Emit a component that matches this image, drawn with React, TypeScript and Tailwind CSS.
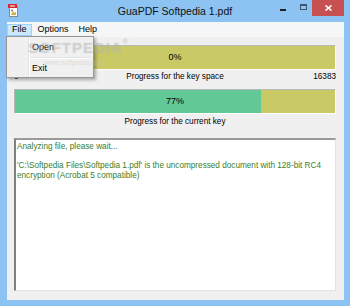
import React from 'react';

const FONT = { fontFamily: '"Liberation Sans", Arial, sans-serif' };

function AppIcon() {
  return (
    <svg width="11" height="13" viewBox="0 0 11 13">
      <rect x="1.5" y="2.5" width="8" height="10" fill="#fff" stroke="#8a8a8a" />
      <rect x="0" y="0" width="9" height="4" fill="#d8262a" />
      <rect x="2" y="1.5" width="5" height="1" fill="#fff" />
      <path d="M3 11 L5 7 L6.5 9 L8 7.5 L8 11 Z" fill="#d8b13a" />
      <circle cx="4" cy="6.5" r="0.9" fill="#6a6a6a" />
    </svg>
  );
}

function ProgressBar({ percent }: { percent: number }) {
  return (
    <div className="relative h-[25px] bg-[#c9c966] border-t border-l border-[#b9b9b9] border-r-white border-b-white border-r border-b">
      <div className="h-full bg-[#62c996]" style={{ width: `${percent}%` }} />
      <div className="absolute inset-0 flex items-center justify-center text-[9px] text-black">
        {percent}%
      </div>
    </div>
  );
}

export default function App() {
  return (
    <div
      className="relative w-[350px] h-[306px] overflow-hidden bg-[#8cc3f2] flex flex-col text-black"
      style={FONT}
    >
      {/* title bar */}
      <div className="h-[22px] flex items-start shrink-0">
        <div className="w-[80px] pl-[8px] pt-[4px]">
          <AppIcon />
        </div>
        <div className="flex-1 text-center text-[10.5px] leading-[22px] text-[#111]">
          GuaPDF Softpedia 1.pdf
        </div>
        <div className="w-[80px] flex justify-end pr-[6px]">
          <div className="w-[22px] h-[16px] flex items-center justify-center">
            <div className="w-[6px] h-[2px] bg-[#222] mt-[3px]" />
          </div>
          <div className="w-[18px] h-[16px] flex items-center justify-center">
            <div className="w-[7px] h-[6px] border border-t-2 border-[#3d5571] -mt-[3px]" />
          </div>
          <div className="w-[32px] h-[16px] bg-[#c75050] flex items-center justify-center">
            <svg width="7" height="6" viewBox="0 0 7 6">
              <path d="M0.5 0.5 L6.5 5.5 M6.5 0.5 L0.5 5.5" stroke="#fff" strokeWidth="1.6" />
            </svg>
          </div>
        </div>
      </div>

      {/* client */}
      <div className="flex-1 ml-[7px] mr-[6px] mb-[6px] flex flex-col bg-[#f0f0f0]">
        <div className="h-[15px] bg-[#f5f6f7] flex items-center text-[9px] shrink-0">
          <div className="h-[12px] px-[4px] flex items-center bg-[#cce8ff] border border-[#99d1ff]">File</div>
          <div className="px-[5px] ml-[1px]">Options</div>
          <div className="px-[5px]">Help</div>
        </div>

        <div className="flex-1 pt-[8px] pl-[7px] pr-[8px] flex flex-col text-[8.2px]">
          <ProgressBar percent={0} />
          <div className="mt-[2px] h-[10px] grid grid-cols-3 items-center leading-[10px]">
            <div>0</div>
            <div className="text-center whitespace-nowrap">Progress for the key space</div>
            <div className="text-right">16383</div>
          </div>
          <div className="mt-[7px]">
            <ProgressBar percent={77} />
          </div>
          <div className="mt-[3px] h-[10px] leading-[10px] text-center">Progress for the current key</div>
          <div className="mt-[11px] h-[153px] bg-white border-l-2 border-t-2 border-l-[#7f7f7f] border-t-[#9a9a9a] border-r border-b border-r-[#e3e3e3] border-b-[#e3e3e3] pl-[1px] pt-[2px] text-[#3a7d2c] leading-[10px]">
            <div>Analyzing file, please wait...</div>
            <div className="h-[9px]" />
            <div className="whitespace-nowrap">'C:\Softpedia Files\Softpedia 1.pdf' is the uncompressed document with 128-bit RC4</div>
            <div>encryption (Acrobat 5 compatible)</div>
          </div>
        </div>
      </div>

      {/* File dropdown */}
      <div className="absolute left-[6px] top-[36px] w-[88px] h-[42px] bg-[#f0f0f0] border border-[#979797] shadow-[2px_2px_3px_rgba(0,0,0,0.3)] text-[9px]">
        <div className="absolute left-[21px] top-0 bottom-0 w-[1px] bg-[#e2e3e3]" />
        <div className="absolute left-[22px] top-0 bottom-0 w-[1px] bg-white" />
        <div className="flex flex-col pt-[4px]">
          <div className="h-[13px] leading-[13px] pl-[25px]">Open</div>
          <div className="ml-[23px] mr-[2px] my-[3px] h-[2px] border-t border-[#e2e3e3] border-b border-b-white" />
          <div className="h-[13px] leading-[13px] pl-[25px]">Exit</div>
        </div>
      </div>

      {/* watermark */}
      <div className="absolute left-[28px] top-[37px] text-[15px] font-bold tracking-[1px] text-white/20 [text-shadow:0_0_1px_rgba(140,140,140,0.45)] pointer-events-none">
        SOFTPEDIA<span className="text-[7px] align-top">®</span>
      </div>
      <div className="absolute left-[44px] top-[58px] text-[7px] text-[#c8c8c8]/50 pointer-events-none">
        www.softpedia.com
      </div>
    </div>
  );
}
